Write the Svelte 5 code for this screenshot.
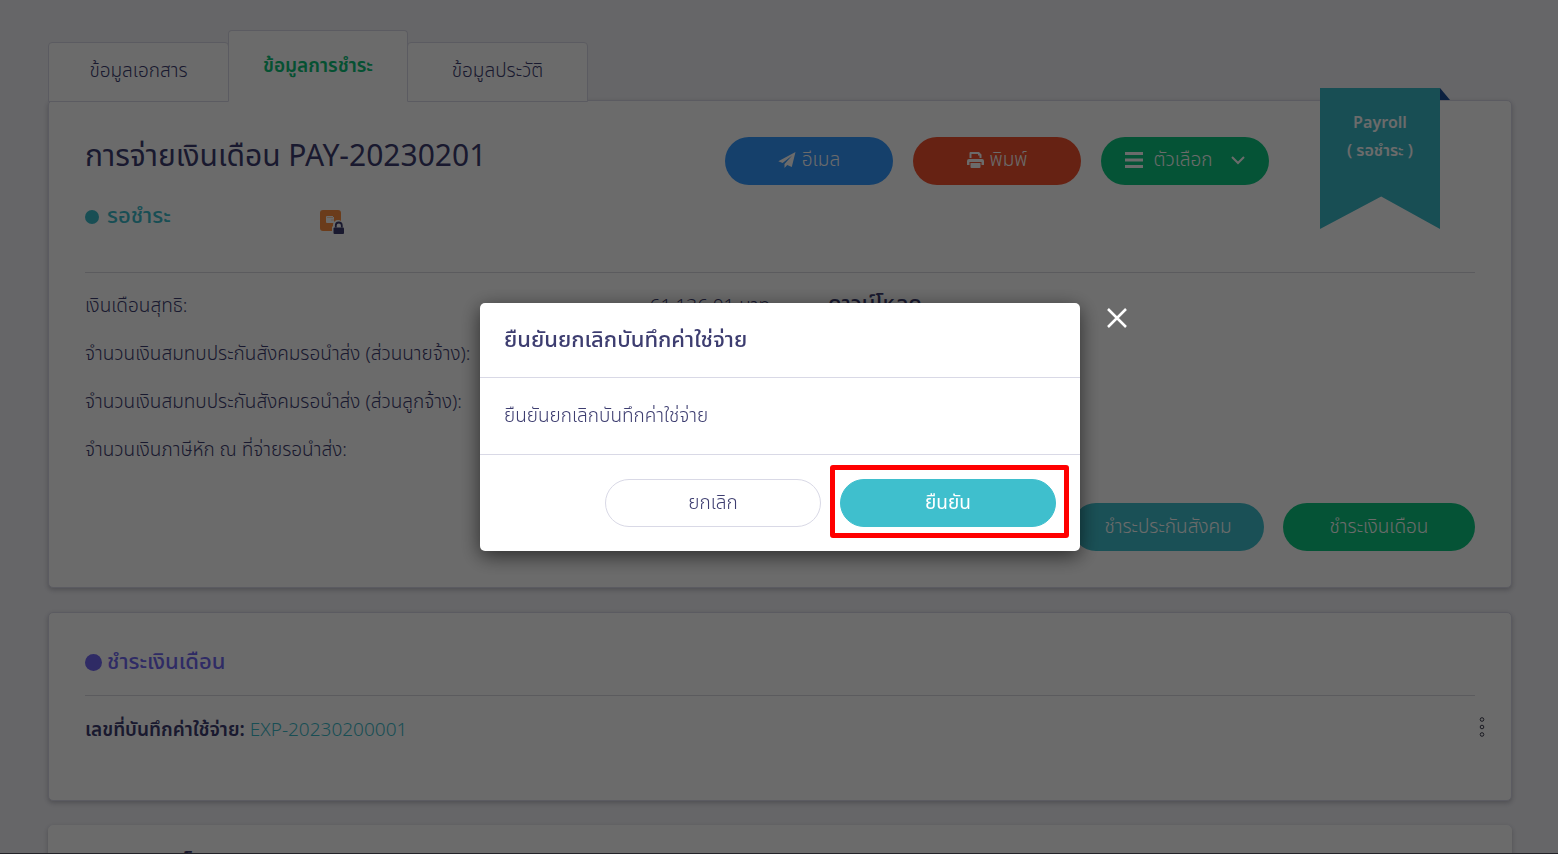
<script>
  const tabs = [
    { label: 'ข้อมูลเอกสาร', active: false },
    { label: 'ข้อมูลการชำระ', active: true },
    { label: 'ข้อมูลประวัติ', active: false }
  ];
  const rows = [
    { label: 'เงินเดือนสุทธิ:', value: '61,136.01 บาท' },
    { label: 'จำนวนเงินสมทบประกันสังคมรอนำส่ง (ส่วนนายจ้าง):', value: '' },
    { label: 'จำนวนเงินสมทบประกันสังคมรอนำส่ง (ส่วนลูกจ้าง):', value: '' },
    { label: 'จำนวนเงินภาษีหัก ณ ที่จ่ายรอนำส่ง:', value: '' }
  ];
</script>

<div class="page">
  <nav class="tabs">
    {#each tabs as tab}
      <button class="tab" class:active={tab.active}>{tab.label}</button>
    {/each}
  </nav>

  <main>
    <section class="card first">
      <div class="ribbon">
        <span class="fold"></span>
        <div class="ribbon-body">
          <span>Payroll</span>
          <span>( รอชำระ )</span>
        </div>
      </div>

      <header class="head">
        <h1>การจ่ายเงินเดือน PAY-20230201</h1>
        <div class="actions">
          <button class="btn blue">
            <svg width="18" height="16" viewBox="0 0 18 16" fill="#fff"><path d="M17.5 0 L0.3 9.2 L4.6 11 L14.2 3.4 L6.5 12 V16 L9.2 13 L13.8 14.9 Z" /></svg>
            <span>อีเมล</span>
          </button>
          <button class="btn red">
            <svg width="17" height="16" viewBox="0 0 17 16" fill="#fff"><path d="M2.500 1a1 1 0 0 1 1-1h8.500l2.500 2.500V6h-2V3.500h-1.500V2h-6.500v4h-2z" /><path d="M2 7h13a2 2 0 0 1 2 2v3.500a.500.500 0 0 1-.500.500H14.500V10H2.500v3H.500a.500.500 0 0 1-.500-.500V9a2 2 0 0 1 2-2z" /><path d="M3.500 11h10v4a1 1 0 0 1-1 1h-8a1 1 0 0 1-1-1z" /></svg>
            <span>พิมพ์</span>
          </button>
          <button class="btn green options">
            <svg width="18" height="16" viewBox="0 0 18 16" fill="#fff"><path d="M0 0h18v3H0zM0 6.500h18v3H0zM0 13h18v3H0z" /></svg>
            <span>ตัวเลือก</span>
            <svg class="chev" width="14" height="9" viewBox="0 0 14 9" fill="none" stroke="#fff" stroke-width="2"><path d="M1 1l6 6 6-6" /></svg>
          </button>
        </div>
      </header>

      <div class="status">
        <span class="state"><i class="dot teal"></i>รอชำระ</span>
        <svg class="wallet" width="26" height="26" viewBox="0 0 26 26">
          <rect x="1" y="1" width="21" height="21" rx="3" fill="#ff9040" />
          <path d="M7 8a1 1 0 0 1 1-1h6v1h1v6H8a1 1 0 0 1-1-1z" fill="#fff" />
          <path d="M8 8.500h6M12 11h3" stroke="#ff9040" stroke-width="0.400" />
          <path d="M14 17.500v-1.500a5 5 0 0 1 10 0v1.500h1.500V26H13v-8.500z" fill="#fff" />
          <rect x="14.500" y="18.500" width="10.500" height="6.500" rx="1" fill="#3d3d70" />
          <path d="M16.800 18.500v-2a3 3 0 0 1 6 0v2" fill="none" stroke="#3d3d70" stroke-width="1.800" />
        </svg>
      </div>

      <div class="details">
        <dl>
          {#each rows as row}
            <div class="row"><dt>{row.label}</dt><dd>{row.value}</dd></div>
          {/each}
        </dl>
        <h2>ดาวน์โหลด</h2>
      </div>

      <div class="pay">
        <button class="btn teal">ชำระประกันสังคม</button>
        <button class="btn green">ชำระเงินเดือน</button>
      </div>
    </section>

    <section class="card second">
      <h2 class="pay-title"><i class="dot violet"></i>ชำระเงินเดือน</h2>
      <div class="record">
        <p><b>เลขที่บันทึกค่าใช้จ่าย:</b> <a href="#expense">EXP-20230200001</a></p>
        <button class="more" aria-label="เมนู">
          <svg width="6" height="20" viewBox="0 0 6 20" fill="none" stroke="#3d3d50"><circle cx="3" cy="2.500" r="1.800" /><circle cx="3" cy="10" r="1.800" /><circle cx="3" cy="17.500" r="1.800" /></svg>
        </button>
      </div>
    </section>

    <section class="card third">
      <h2>เอกสารการโอน</h2>
    </section>
  </main>
</div>

<div class="overlay">
  <div class="modal" role="dialog" aria-modal="true" aria-labelledby="dialog-title">
    <button class="close" aria-label="ปิด">
      <svg width="20" height="20" viewBox="0 0 20 20" stroke="#fff" stroke-width="2.500"><path d="M1 1l18 18M19 1L1 19" /></svg>
    </button>
    <h2 id="dialog-title">ยืนยันยกเลิกบันทึกค่าใช่จ่าย</h2>
    <p>ยืนยันยกเลิกบันทึกค่าใช่จ่าย</p>
    <footer>
      <button class="choice cancel">ยกเลิก</button>
      <div class="marked"><button class="choice confirm">ยืนยัน</button></div>
    </footer>
  </div>
</div>

<style>
  :global(body) {
    background: #f3f3f8;
    overflow: hidden;
  }
  .page,
  .overlay,
  button {
    font-family: 'Noto Sans Thai', 'Noto Sans', sans-serif;
    font-size: 19px;
    font-weight: 300;
    line-height: 24px;
    color: #3d3d70;
  }
  * {
    box-sizing: border-box;
  }
  h1,
  h2,
  p,
  dl,
  dd {
    margin: 0;
  }
  button {
    border: 0;
    padding: 0;
    background: none;
    cursor: pointer;
    white-space: nowrap;
  }
  .page {
    height: 100vh;
    overflow: hidden;
    padding: 30px 46px 0 48px;
    border-bottom: 1px solid #555560;
  }
  .tabs {
    display: flex;
    align-items: flex-end;
    position: relative;
    z-index: 1;
    margin-bottom: -2px;
  }
  .tab {
    width: 181px;
    height: 60px;
    margin-right: -1px;
    background: #fff;
    border: 1px solid #d9d9e6;
    border-radius: 4px 4px 0 0;
  }
  .tab.active {
    width: 180px;
    height: 72px;
    padding-top: 2px;
    border-bottom-color: #fff;
    color: #0cc078;
    font-weight: 600;
    position: relative;
    z-index: 1;
  }
  main {
    display: grid;
    gap: 24px;
  }
  .card {
    position: relative;
    background: #fff;
    border: 1px solid #d9d9e6;
    border-radius: 5px;
    box-shadow: 0 2px 5px rgba(60, 60, 80, 0.3);
    padding: 36px;
  }
  .ribbon {
    position: absolute;
    top: -13px;
    right: 71px;
    width: 120px;
  }
  .ribbon-body {
    height: 141px;
    padding-top: 21px;
    display: flex;
    flex-direction: column;
    align-items: center;
    background: #3bbac9;
    clip-path: polygon(0 0, 100% 0, 100% 100%, 51% 77%, 0 100%);
    color: #fff;
    font-size: 16px;
    font-weight: 600;
    line-height: 28px;
  }
  .fold {
    position: absolute;
    left: 100%;
    width: 10px;
    height: 12px;
    background: #1d4f98;
    clip-path: polygon(0 0, 100% 100%, 0 100%);
  }
  .head {
    display: flex;
    justify-content: space-between;
    padding-right: 206px;
  }
  h1 {
    font-size: 30px;
    line-height: 40px;
    font-weight: 400;
  }
  .actions {
    display: flex;
    gap: 20px;
  }
  .btn {
    width: 168px;
    height: 48px;
    border-radius: 24px;
    color: #fff;
    display: flex;
    align-items: center;
    justify-content: center;
    gap: 6px;
  }
  .actions svg {
    margin-bottom: 2px;
  }
  .blue { background: #3298ff; }
  .red { background: #f3512f; }
  .green { background: #0cc780; }
  .btn.teal { background: #3fbfcd; }
  .options { gap: 10px; }
  .chev { margin-left: 8px; }
  .status {
    display: flex;
    align-items: center;
    height: 88px;
    padding-bottom: 24px;
    border-bottom: 1px solid #d9d9e0;
  }
  .wallet {
    margin-top: 10px;
  }
  .state {
    display: flex;
    align-items: center;
    width: 234px;
    gap: 8px;
    color: #3bbac9;
    font-size: 22px;
    font-weight: 500;
  }
  .dot {
    width: 14px;
    height: 14px;
    border-radius: 50%;
    background: #3bbac9;
  }
  .dot.violet {
    width: 17px;
    height: 17px;
    background: #7067f0;
  }
  .details {
    display: flex;
    gap: 58px;
    padding-top: 10px;
  }
  dl {
    flex: 0 0 685px;
  }
  .row {
    display: flex;
    justify-content: space-between;
    height: 48px;
    align-items: center;
  }
  .details h2 {
    font-size: 22px;
    font-weight: 500;
    line-height: 44px;
  }
  .pay {
    display: flex;
    justify-content: flex-end;
    gap: 19px;
    padding-top: 28px;
  }
  .pay .btn {
    width: 192px;
    padding-top: 2px;
  }
  .second {
    padding-bottom: 32px;
  }
  .pay-title {
    display: flex;
    align-items: center;
    gap: 5px;
    height: 47px;
    padding: 2px 0 21px;
    border-bottom: 1px solid #d9d9e0;
    color: #7067f0;
    font-size: 22px;
    font-weight: 500;
  }
  .record {
    display: flex;
    align-items: center;
    justify-content: space-between;
    padding: 21px 0 24px;
    margin-right: -10px;
  }
  .record b {
    font-weight: 600;
  }
  .record a {
    color: #3bbac9;
    text-decoration: none;
  }
  .third {
    height: 120px;
    padding-top: 25px;
    border-color: #fff;
  }
  .third h2 {
    font-size: 22px;
    font-weight: 500;
  }
  .overlay {
    position: fixed;
    inset: 0;
    z-index: 5;
    display: grid;
    place-items: center;
    padding-left: 2px;
    background: rgba(0, 0, 0, 0.58);
  }
  .modal {
    position: relative;
    width: 600px;
    background: #fff;
    border-radius: 5px;
    box-shadow: 0 5px 20px rgba(0, 0, 0, 0.6);
  }
  .modal h2 {
    padding: 26px 24px 24px;
    font-size: 22px;
    font-weight: 500;
    border-bottom: 1px solid #d9d9e6;
  }
  .modal p {
    padding: 27px 24px 25px;
    border-bottom: 1px solid #d9d9e6;
  }
  .modal footer {
    display: flex;
    justify-content: flex-end;
    align-items: flex-start;
    gap: 9px;
    padding: 10px 11px 13px;
  }
  .choice {
    width: 216px;
    height: 48px;
    padding-top: 2px;
    border: 1px solid #d9d9e6;
    border-radius: 24px;
  }
  .cancel {
    margin-top: 14px;
  }
  .confirm {
    display: block;
    background: #3fbfcd;
    border-color: #3fbfcd;
    color: #fff;
    font-weight: 400;
  }
  .marked {
    padding: 9px 8px 6px 5px;
    border: 5px solid #f00;
    border-radius: 3px;
  }
  .close {
    position: absolute;
    left: calc(100% + 27px);
    top: 5px;
    height: 20px;
    line-height: 0;
  }
</style>
